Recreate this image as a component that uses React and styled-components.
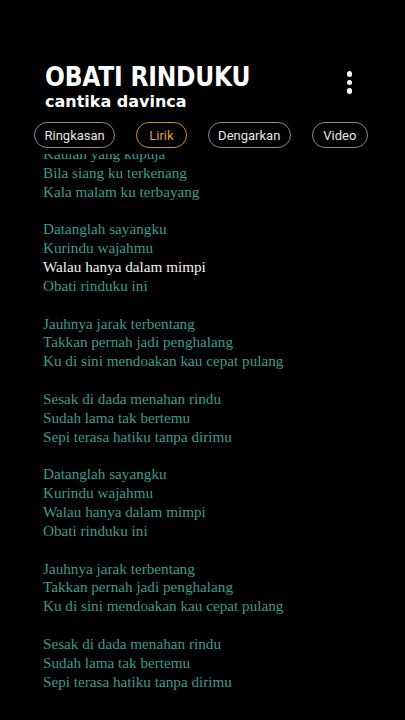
import React from "react";
import styled, { createGlobalStyle } from "styled-components";

const Global = createGlobalStyle`
  html, body { margin: 0; padding: 0; background: #000; }
  body { width: 405px; height: 720px; overflow: hidden; }
  #root { width: 405px; height: 720px; }
`;

const Screen = styled.div`
  width: 405px;
  height: 720px;
  background: #000;
  display: flex;
  flex-direction: column;
  overflow: hidden;
`;

const Header = styled.header`
  display: flex;
  align-items: flex-start;
  justify-content: space-between;
  padding: 62px 53px 0 45px;
`;

const TitleBlock = styled.div`
  display: flex;
  flex-direction: column;
`;

const Title = styled.h1`
  margin: 0;
  font-family: "DejaVu Sans Condensed", "DejaVu Sans", sans-serif;
  font-weight: bold;
  font-size: 26px;
  line-height: 30px;
  color: #fff;
  letter-spacing: -0.2px;
`;

const Artist = styled.div`
  font-family: "DejaVu Sans", sans-serif;
  font-weight: bold;
  font-size: 16px;
  line-height: 20px;
  color: #fff;
`;

const MenuButton = styled.button`
  background: none;
  border: none;
  padding: 9px 0 0;
  display: flex;
  flex-direction: column;
  gap: 3px;
  cursor: pointer;
`;

const Dot = styled.span`
  width: 5.5px;
  height: 5.5px;
  border-radius: 50%;
  background: #fff;
`;

const Tabs = styled.nav`
  display: flex;
  gap: 21px;
  padding: 10px 0 0 34px;
`;

const Tab = styled.button`
  height: 26px;
  box-sizing: border-box;
  padding: 0 ${(p) => p.$pad}px;
  border-radius: 13px;
  border: 1.5px solid ${(p) => (p.$active ? "#d2883a" : "#8a8a8a")};
  background: transparent;
  color: ${(p) => (p.$active ? "#e09a4a" : "#e6e6e6")};
  font-family: Roboto, "Liberation Sans", sans-serif;
  font-size: 13px;
  display: flex;
  align-items: center;
  justify-content: center;
`;

const Viewport = styled.div`
  flex: 1;
  overflow: hidden;
  margin-top: 6px;
`;

const LyricList = styled.div`
  margin-top: -9px;
  padding-left: 43px;
  display: flex;
  flex-direction: column;
`;

const Line = styled.div`
  font-family: "Liberation Serif", serif;
  font-size: 15.2px;
  line-height: 18.85px;
  height: 18.85px;
  color: ${(p) => (p.$current ? "#f2f2f2" : "#3f9b8b")};
  white-space: nowrap;
`;

const lyrics = [
  "Kaulah yang kupuja",
  "Bila siang ku terkenang",
  "Kala malam ku terbayang",
  "",
  "Datanglah sayangku",
  "Kurindu wajahmu",
  "Walau hanya dalam mimpi",
  "Obati rinduku ini",
  "",
  "Jauhnya jarak terbentang",
  "Takkan pernah jadi penghalang",
  "Ku di sini mendoakan kau cepat pulang",
  "",
  "Sesak di dada menahan rindu",
  "Sudah lama tak bertemu",
  "Sepi terasa hatiku tanpa dirimu",
  "",
  "Datanglah sayangku",
  "Kurindu wajahmu",
  "Walau hanya dalam mimpi",
  "Obati rinduku ini",
  "",
  "Jauhnya jarak terbentang",
  "Takkan pernah jadi penghalang",
  "Ku di sini mendoakan kau cepat pulang",
  "",
  "Sesak di dada menahan rindu",
  "Sudah lama tak bertemu",
  "Sepi terasa hatiku tanpa dirimu",
];

const tabs = [
  { label: "Ringkasan", pad: 9.5 },
  { label: "Lirik", pad: 12, active: true },
  { label: "Dengarkan", pad: 9.5 },
  { label: "Video", pad: 10.5 },
];

export default function App() {
  return (
    <>
      <Global />
      <Screen>
        <Header>
          <TitleBlock>
            <Title>OBATI RINDUKU</Title>
            <Artist>cantika davinca</Artist>
          </TitleBlock>
          <MenuButton aria-label="menu">
            <Dot />
            <Dot />
            <Dot />
          </MenuButton>
        </Header>
        <Tabs>
          {tabs.map((t) => (
            <Tab key={t.label} $active={t.active} $pad={t.pad}>
              {t.label}
            </Tab>
          ))}
        </Tabs>
        <Viewport>
          <LyricList>
            {lyrics.map((l, i) => (
              <Line key={i} $current={i === 6}>
                {l || "\u00a0"}
              </Line>
            ))}
          </LyricList>
        </Viewport>
      </Screen>
    </>
  );
}
